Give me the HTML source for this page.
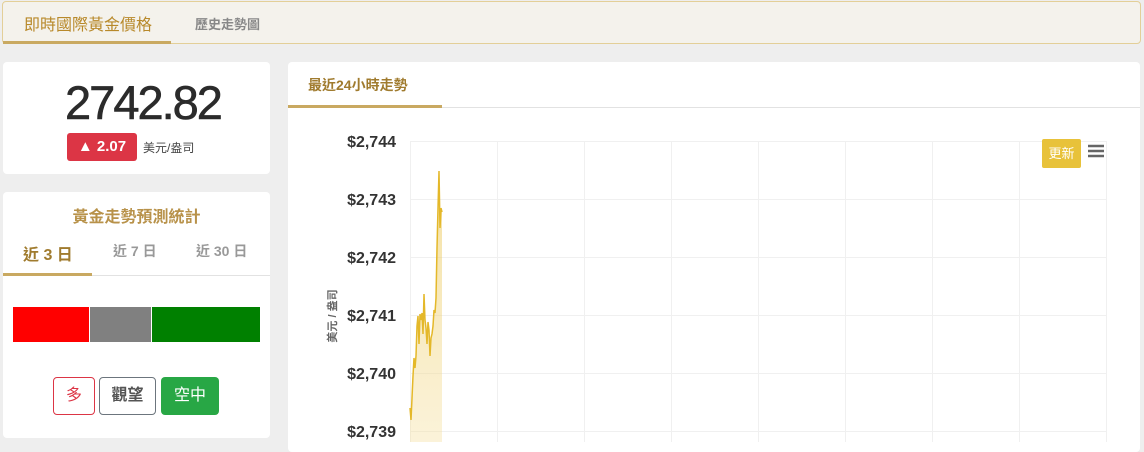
<!DOCTYPE html>
<html><head><meta charset="utf-8"><style>
body{margin:0;width:1144px;height:442px;background:#eeeeee;font-family:"Liberation Sans","Noto Sans CJK TC",sans-serif;overflow:hidden;position:relative}
.abs{position:absolute}
.card{position:absolute;background:#fff;border-radius:4px}
</style></head><body>
<div class="abs" style="left:2px;top:1px;width:1137px;height:41px;background:#f4f2ec;border:1px solid #e3cf98;border-radius:4px"></div>
<div class="abs" style="left:3px;top:41px;width:168px;height:3px;background:#c9a961"></div>
<div class="abs" style="left:24px;top:11px;font-size:16px;color:#b8892a">即時國際黃金價格</div>
<div class="abs" style="left:195px;top:14px;font-size:13px;color:#888;font-weight:bold">歷史走勢圖</div>

<div class="card" style="left:3px;top:62px;width:267px;height:112px"></div>
<div class="abs" style="left:0;width:286px;top:75px;text-align:center;font-size:47px;letter-spacing:-2px;color:#2b2b2b;line-height:56px;-webkit-text-stroke:0.6px #2b2b2b">2742.82</div>
<div class="abs" style="left:67px;top:133px;width:70px;height:28px;background:#dc3545;border-radius:3px;color:#fff;font-size:15px;font-weight:bold;line-height:28px;text-align:center">▲ 2.07</div>
<div class="abs" style="left:143px;top:139px;font-size:12px;color:#444">美元/盎司</div>

<div class="card" style="left:3px;top:192px;width:267px;height:246px"></div>
<div class="abs" style="left:0;width:273px;top:203px;text-align:center;font-size:16px;color:#b8924a;font-weight:bold">黃金走勢預測統計</div>
<div class="abs" style="left:23px;top:241px;font-size:16px;color:#a07b2e;font-weight:bold">近 3 日</div>
<div class="abs" style="left:113px;top:241px;font-size:14px;color:#999;font-weight:bold">近 7 日</div>
<div class="abs" style="left:196px;top:241px;font-size:14px;color:#999;font-weight:bold">近 30 日</div>
<div class="abs" style="left:3px;top:275px;width:267px;height:1px;background:#e2e2e2"></div>
<div class="abs" style="left:3px;top:273px;width:89px;height:3px;background:#c9a961"></div>
<div class="abs" style="left:13px;top:307px;width:76px;height:35px;background:#ff0000"></div>
<div class="abs" style="left:90px;top:307px;width:61px;height:35px;background:#808080"></div>
<div class="abs" style="left:152px;top:307px;width:108px;height:35px;background:#008000"></div>
<div class="abs" style="left:53px;top:377px;width:40px;height:36px;border:1px solid #dc3545;border-radius:4px;color:#dc3545;font-size:16px;line-height:36px;text-align:center">多</div>
<div class="abs" style="left:99px;top:377px;width:55px;height:36px;border:1px solid #6c757d;border-radius:4px;color:#555;font-size:16px;font-weight:bold;line-height:36px;text-align:center">觀望</div>
<div class="abs" style="left:161px;top:377px;width:58px;height:38px;background:#28a745;border-radius:4px;color:#fff;font-size:16px;line-height:38px;text-align:center">空中</div>

<div class="card" style="left:288px;top:62px;width:852px;height:390px"></div>
<div class="abs" style="left:288px;top:107px;width:852px;height:1px;background:#e2e2e2"></div>
<div class="abs" style="left:288px;top:105px;width:154px;height:3px;background:#c9a961"></div>
<div class="abs" style="left:308px;top:75px;font-size:14px;color:#a07b2e;font-weight:bold">最近24小時走勢</div>

<svg class="abs" style="left:288px;top:108px" width="852" height="334">
<g stroke="#f0f0f0" stroke-width="1">
<line x1="122" y1="33.5" x2="819" y2="33.5"/><line x1="122" y1="91.5" x2="819" y2="91.5"/><line x1="122" y1="149.5" x2="819" y2="149.5"/><line x1="122" y1="207.5" x2="819" y2="207.5"/><line x1="122" y1="265.5" x2="819" y2="265.5"/><line x1="122" y1="323.5" x2="819" y2="323.5"/>
<line x1="122.5" y1="33" x2="122.5" y2="334"/><line x1="209.5" y1="33" x2="209.5" y2="334"/><line x1="296.5" y1="33" x2="296.5" y2="334"/><line x1="383.5" y1="33" x2="383.5" y2="334"/><line x1="470.5" y1="33" x2="470.5" y2="334"/><line x1="557.5" y1="33" x2="557.5" y2="334"/><line x1="644.5" y1="33" x2="644.5" y2="334"/><line x1="731.5" y1="33" x2="731.5" y2="334"/><line x1="818.5" y1="33" x2="818.5" y2="334"/>
</g>
<defs><linearGradient id="g" x1="0" y1="0" x2="0" y2="1"><stop offset="0" stop-color="#e8c040" stop-opacity="0.5"/><stop offset="1" stop-color="#f5e0a0" stop-opacity="0.4"/></linearGradient></defs>
<g font-size="16" font-weight="bold" fill="#333" text-anchor="end" font-family="Liberation Sans,sans-serif">
<text x="108" y="39">$2,744</text><text x="108" y="97">$2,743</text><text x="108" y="155">$2,742</text><text x="108" y="213">$2,741</text><text x="108" y="271">$2,740</text><text x="108" y="329">$2,739</text>
</g>
<text transform="translate(48,208) rotate(-90)" font-size="11" fill="#666" font-weight="bold" text-anchor="middle">美元 / 盎司</text>
<polygon fill="url(#g)" points="122,334 122,300 123,312 124,290 125,268 126,250 127,260 128,248 129,218 130,208 131,236 132,206 133,212 134,205 135,226 136,186 137,212 138,220 139,236 140,214 141,222 142,248 143,230 144,226 145,218 146,202 147,205 148,190 149,140 150,100 151,63 152,120 153,100 154,104 154,334"/>
<polyline fill="none" stroke="#e4b829" stroke-width="1.5" points="122,300 123,312 124,290 125,268 126,250 127,260 128,248 129,218 130,208 131,236 132,206 133,212 134,205 135,226 136,186 137,212 138,220 139,236 140,214 141,222 142,248 143,230 144,226 145,218 146,202 147,205 148,190 149,140 150,100 151,63 152,120 153,100 154,104"/>
<rect x="754" y="31" width="39" height="29" rx="2" fill="#e8c23a"/>
<text x="773.5" y="50" font-size="13" fill="#fff" text-anchor="middle">更新</text>
<g stroke="#666" stroke-width="2.5"><line x1="800" y1="38" x2="816" y2="38"/><line x1="800" y1="43" x2="816" y2="43"/><line x1="800" y1="48" x2="816" y2="48"/></g>
</svg>
</body></html>
